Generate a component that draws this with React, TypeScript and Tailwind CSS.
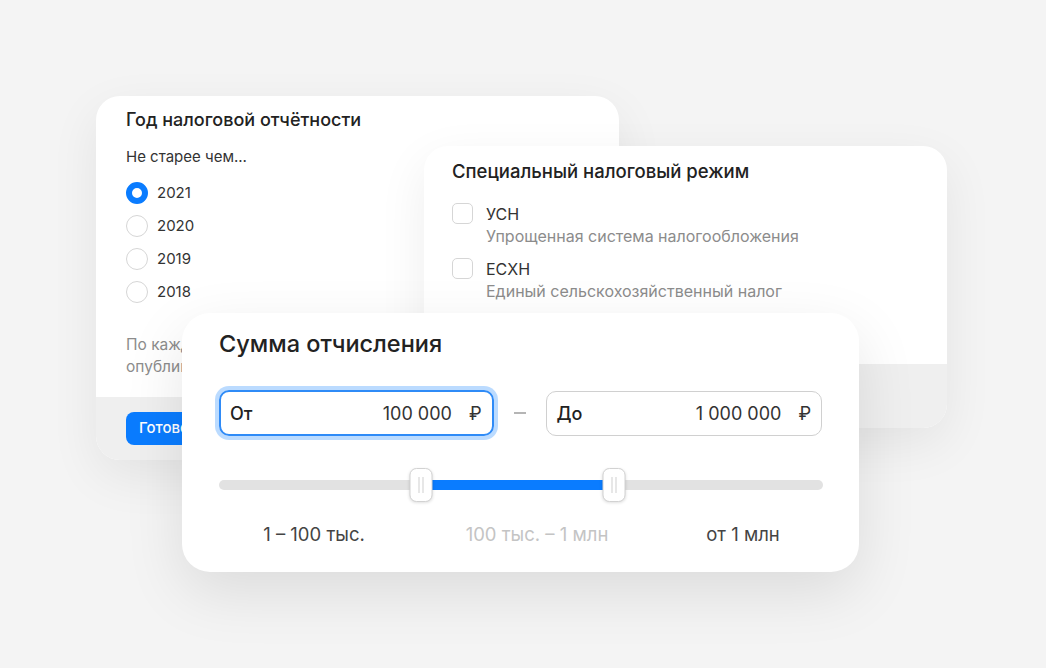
import React from "react";

const years = ["2021", "2020", "2019", "2018"];

const regimes = [
  { code: "УСН", name: "Упрощенная система налогообложения" },
  { code: "ЕСХН", name: "Единый сельскохозяйственный налог" },
];

function Radio({ checked }: { checked: boolean }) {
  if (checked) {
    return <span className="h-[22px] w-[22px] rounded-full border-[6.5px] border-[#0a7cff] bg-white" />;
  }
  return <span className="h-[22px] w-[22px] rounded-full border-[1.5px] border-[#d6d6d6] bg-white" />;
}

function Thumb({ left }: { left: string }) {
  return (
    <div
      className="absolute top-1/2 flex h-[34px] w-[23px] -translate-x-1/2 -translate-y-1/2 items-center justify-center gap-[3px] rounded-[7px] border-[1.5px] border-[#d2d2d2] bg-white shadow-[0_1px_3px_rgba(0,0,0,0.12)]"
      style={{ left }}
    >
      <span className="h-[16px] w-px bg-[#cfcfcf]" />
      <span className="h-[16px] w-px bg-[#cfcfcf]" />
    </div>
  );
}

export default function App() {
  return (
    <div
      className="relative h-[668px] w-[1046px] overflow-hidden bg-[#f4f4f4] text-[#222]"
      style={{ fontFamily: "Inter, 'Noto Sans', sans-serif" }}
    >
      {/* year card */}
      <div className="absolute left-[96px] top-[96px] flex h-[364px] w-[523px] flex-col overflow-hidden rounded-[24px] bg-white shadow-[0_16px_50px_rgba(0,0,0,0.07)]">
        <div className="flex flex-1 flex-col px-[30px] pt-[12px]">
          <div className="text-[18px] font-medium leading-[24px] text-[#222]">Год налоговой отчётности</div>
          <div className="mt-[14px] text-[15px] leading-[22px] text-[#333]">Не старее чем...</div>
          <div className="mt-[14px] flex flex-col gap-[11px]">
            {years.map((y, i) => (
              <div key={y} className="flex items-center gap-[9px]">
                <Radio checked={i === 0} />
                <span className="text-[15px] leading-[22px] text-[#333]">{y}</span>
              </div>
            ))}
          </div>
          <div className="mt-[31px] text-[15.5px] leading-[22px] text-[#8c8c8c]">
            По каждому году данные опубликованы
            <br />
            опубликованы налоговой службой
          </div>
        </div>
        <div className="flex h-[63px] items-center bg-[#efefef] px-[30px]">
          <button className="h-[33px] rounded-[8px] bg-[#0a7cff] px-[13px] text-[15px] font-medium text-white">Готово</button>
        </div>
      </div>

      {/* regime card */}
      <div className="absolute left-[424px] top-[146px] flex h-[282px] w-[523px] flex-col overflow-hidden rounded-[24px] bg-white shadow-[0_16px_50px_rgba(0,0,0,0.07)]">
        <div className="flex flex-1 flex-col px-[28px] pt-[13px]">
          <div className="text-[18.5px] font-medium leading-[24px] text-[#222]">Специальный налоговый режим</div>
          <div className="mt-[20px] flex flex-col gap-[10px]">
            {regimes.map((r) => (
              <div key={r.code} className="flex items-start gap-[13px]">
                <span className="h-[21px] w-[21px] rounded-[5px] border-[1.5px] border-[#d6d6d6] bg-white" />
                <div className="flex flex-col">
                  <span className="text-[16px] leading-[22px] text-[#333]">{r.code}</span>
                  <span className="text-[16px] leading-[23px] text-[#8c8c8c]">{r.name}</span>
                </div>
              </div>
            ))}
          </div>
        </div>
        <div className="h-[64px] bg-[#efefef]" />
      </div>

      {/* amount card */}
      <div className="absolute left-[182px] top-[313px] flex h-[259px] w-[677px] flex-col rounded-[28px] bg-white px-[37px] pt-[15px] shadow-[0_20px_60px_rgba(0,0,0,0.10)]">
        <div className="text-[23.5px] font-medium leading-[32px] text-[#222]">Сумма отчисления</div>
        <div className="mt-[30px] flex items-center">
          <div className="flex h-[46px] w-[275px] items-center rounded-[10px] border-2 border-[#2f8bf7] pl-[9px] pr-[10px] shadow-[0_0_0_4px_rgba(10,124,255,0.28)]">
            <span className="text-[18px] font-medium text-[#222]">От</span>
            <span className="ml-auto text-[18px] text-[#333]">100 000</span>
            <span className="ml-[17px] text-[18px] text-[#333]">₽</span>
          </div>
          <span className="mx-[20px] h-[1.5px] w-[13px] bg-[#b5b5b5]" />
          <div className="flex h-[45px] w-[276px] items-center rounded-[10px] border-[1.5px] border-[#d0d0d0] pl-[9px] pr-[10px]">
            <span className="text-[18px] font-medium text-[#222]">До</span>
            <span className="ml-auto text-[18px] text-[#333]">1 000 000</span>
            <span className="ml-[17px] text-[18px] text-[#333]">₽</span>
          </div>
        </div>
        <div className="relative mt-[44px] h-[10px] w-[604px] rounded-full bg-[#e2e2e2]">
          <div className="absolute left-[33.4%] top-0 h-full w-[32%] bg-[#0a7cff]" />
          <Thumb left="33.4%" />
          <Thumb left="65.4%" />
        </div>
        <div className="mt-[32px] flex text-[18.5px] leading-[24px]">
          <span className="w-[190px] text-center text-[#444]">1 – 100 тыс.</span>
          <span className="w-[256px] text-center text-[#c4c4c4]">100 тыс. – 1 млн</span>
          <span className="w-[156px] text-center text-[#444]">от 1 млн</span>
        </div>
      </div>
    </div>
  );
}
